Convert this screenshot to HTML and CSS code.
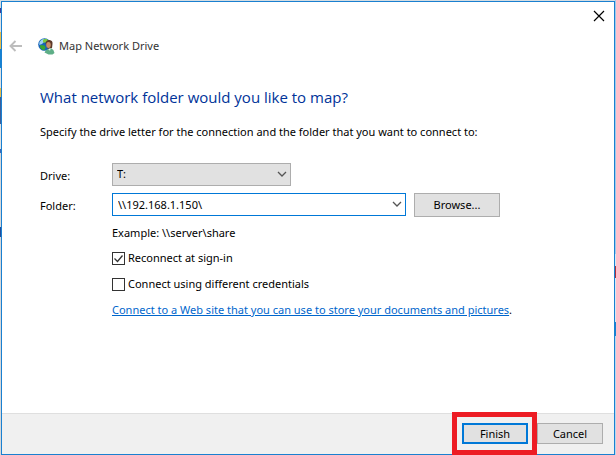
FILE: index.html
```html
<!DOCTYPE html>
<html lang="en">
<head>
<meta charset="utf-8">
<title>Map Network Drive</title>
<link rel="stylesheet" href="styles.css">
</head>
<body>
<div class="desktop">
  <form class="window">
    <header class="titlebar">
      <button class="close" type="button" aria-label="Close">
        <svg width="12" height="12" viewBox="0 0 12 12"><path d="M1 1l10 10M11 1L1 11" fill="none" stroke="#000" stroke-width="1.2"/></svg>
      </button>
    </header>
    <div class="nav">
      <button class="back" type="button" aria-label="Back" disabled>
        <svg width="14" height="12" viewBox="0 0 14 12"><path d="M6.500 1L1.500 6l5 5M1.500 6H13" fill="none" stroke="#bdbdbd" stroke-width="1.900"/></svg>
      </button>
      <svg class="app-icon" width="17" height="17" viewBox="0 0 17 17" aria-hidden="true">
        <circle cx="6.500" cy="6.500" r="6.300" fill="#1763b8"/>
        <path d="M1.500 4Q3 1 6 .8L7 3 4 6 1.200 7z" fill="#9ed3f2"/>
        <path d="M5 1.500l4-.7 1 2-3 2-2-.5z" fill="#7ccb3c"/>
        <path d="M2.500 7l4 .5 1 2-1.500 3Q3 11.500 1.800 9z" fill="#37a532"/>
        <path d="M7.500 5.500Q8 1.800 11.500 2q3.500.5 3 4l-.5 4-4 1z" fill="#5c3a2a"/>
        <ellipse cx="10.500" cy="7" rx="2.300" ry="3" fill="#c98f68"/>
        <path d="M6.500 14.500Q7.500 11.500 10 11l3-.8q3 1.300 3.500 4.800l-2 1.500h-4z" fill="#5eae87"/>
        <path d="M10 11l2 1.800.8-2.300" fill="#e9f3e8"/>
      </svg>
      <span class="nav-title">Map Network Drive</span>
    </div>
    <main class="content">
      <h1 class="heading">What network folder would you like to map?</h1>
      <p class="intro">Specify the drive letter for the connection and the folder that you want to connect to:</p>
      <div class="row">
        <label class="label" for="drive">Drive:</label>
        <div class="combo combo-drive">
          <select class="select" id="drive"><option>T:</option></select>
          <svg class="chevron" width="10" height="6" viewBox="0 0 10 6"><path d="M1 1l4 4 4-4" fill="none" stroke="#555" stroke-width="1.300"/></svg>
        </div>
      </div>
      <div class="row">
        <label class="label" for="folder">Folder:</label>
        <div class="combo combo-folder">
          <input class="input" id="folder" type="text" value="\\192.168.1.150\">
          <svg class="chevron" width="10" height="6" viewBox="0 0 10 6"><path d="M1 1l4 4 4-4" fill="none" stroke="#555" stroke-width="1.300"/></svg>
        </div>
        <button class="button browse" type="button">Browse...</button>
      </div>
      <div class="options">
        <p class="example">Example: \\server\share</p>
        <label class="check"><input class="box" type="checkbox" checked>Reconnect at sign-in</label>
        <label class="check"><input class="box" type="checkbox">Connect using different credentials</label>
        <p class="web"><a class="link" href="#">Connect to a Web site that you can use to store your documents and pictures</a>.</p>
      </div>
    </main>
    <footer class="footer">
      <div class="marked"><button class="button primary" type="submit">Finish</button></div>
      <button class="button" type="button">Cancel</button>
    </footer>
  </form>
</div>
</body>
</html>
```
FILE: styles.css
```css
* {
  box-sizing: border-box;
}

body {
  margin: 0;
  font-family: "Segoe UI", "Noto Sans", "Open Sans", sans-serif;
  font-size: 11px;
  line-height: 16px;
  color: #000;
}

.desktop {
  display: flex;
  min-height: 100vh;
  padding: 1px 1px 0;
  overflow: hidden;
  background:
    linear-gradient(#d5dde2 8px, #3b3c98 8px 13px, #dfe2e4 13px 32px, #e8bd4a 32px 49px, #1682d2 49px 68px, #dfe2e4 68px 88px, #e8bd4a 88px 97px, #3a5f9c 97px 124px, #dfe2e4 124px 149px, #3868b8 149px 153px, #d5d7da 153px 227px, #1f4d9c 227px 237px, #d5d7da 237px) left / 1px 100% no-repeat,
    linear-gradient(#9fcbea 254px, #d9e8f2 254px 266px, #a83240 266px 278px, #d9e8f2 278px 322px, #1682d2 322px 336px, #b9d8ed 336px) right / 1px 100% no-repeat,
    #d5dde2;
}

.window {
  display: flex;
  flex: 1;
  flex-direction: column;
  border: 1px solid #1a80d0;
  background: #fff;
}

.titlebar {
  display: flex;
  justify-content: flex-end;
  height: 32px;
  padding: 8px 9px 0 0;
}

.close,
.back {
  display: flex;
  padding: 0;
  border: 0;
  background: none;
}

.nav {
  display: flex;
  align-items: center;
  height: 24px;
  padding-left: 7px;
}

.app-icon {
  margin-left: 15px;
}

.nav-title {
  margin-left: 4px;
  color: #333;
}

.close {
  padding: 0 0 12px;
}

.content {
  flex: 1;
  padding: 28px 38px 0;
}

.heading {
  margin: 0;
  font-family: "Segoe UI", "Open Sans", sans-serif;
  font-size: 15px;
  font-weight: 400;
  line-height: 22px;
  color: #039;
}

.intro {
  margin: 16px 0 21px;
}

.row {
  display: flex;
  align-items: center;
  height: 26px;
  margin-bottom: 4px;
}

.label {
  flex: none;
  align-self: flex-end;
  width: 72px;
  padding-bottom: 3px;
}

.combo {
  display: grid;
  align-items: center;
  height: 24px;
}

.combo-drive {
  width: 179px;
}

.combo-folder {
  width: 294px;
}

.select,
.input,
.chevron {
  grid-area: 1 / 1;
}

.select,
.input {
  width: 100%;
  height: 23px;
  margin: 0;
  padding: 0 24px 0 4px;
  border: 1px solid #adadad;
  border-radius: 0;
  outline: 0;
  appearance: none;
  background: #e1e1e1;
  font: inherit;
  color: inherit;
}

.input {
  padding-left: 5px;
  border-color: #0078d7;
  background: #fff;
}

.chevron {
  justify-self: end;
  margin-right: 4px;
  pointer-events: none;
}

.button {
  width: 66px;
  height: 21px;
  padding: 0;
  border: 1px solid #adadad;
  background: #e1e1e1;
  font: inherit;
  color: inherit;
}

.browse {
  align-self: flex-end;
  width: 86px;
  height: 24px;
  margin-left: 8px;
}

.primary {
  display: block;
  border: 2px solid #0078d7;
}

.options {
  padding-left: 72px;
}

.example {
  margin: 8px 0 9px;
}

.check {
  display: flex;
  align-items: center;
  gap: 3px;
  margin-bottom: 10px;
}

.box {
  width: 13px;
  height: 13px;
  margin: 0;
  border: 1px solid #333;
  appearance: none;
  background: #fff;
}

.box:checked {
  background: url("data:image/svg+xml,%3Csvg xmlns='http://www.w3.org/2000/svg' viewBox='0 0 11 11'%3E%3Cpath d='M1.500 5.500l3 3 5-6' fill='none' stroke='%23333' stroke-width='1.300'/%3E%3C/svg%3E") center / 11px 11px;
}

.web {
  margin: 0;
}

.link {
  color: #0066cc;
}

.footer {
  display: flex;
  justify-content: flex-end;
  gap: 9px;
  padding: 9px 11px 10px;
  border-top: 1px solid #dfdfdf;
  background: #f0f0f0;
}

.marked {
  position: relative;
}

.marked::after {
  content: "";
  position: absolute;
  inset: -11px -9px -11px -10px;
  border: 5px solid #ed1c24;
  pointer-events: none;
}
```
